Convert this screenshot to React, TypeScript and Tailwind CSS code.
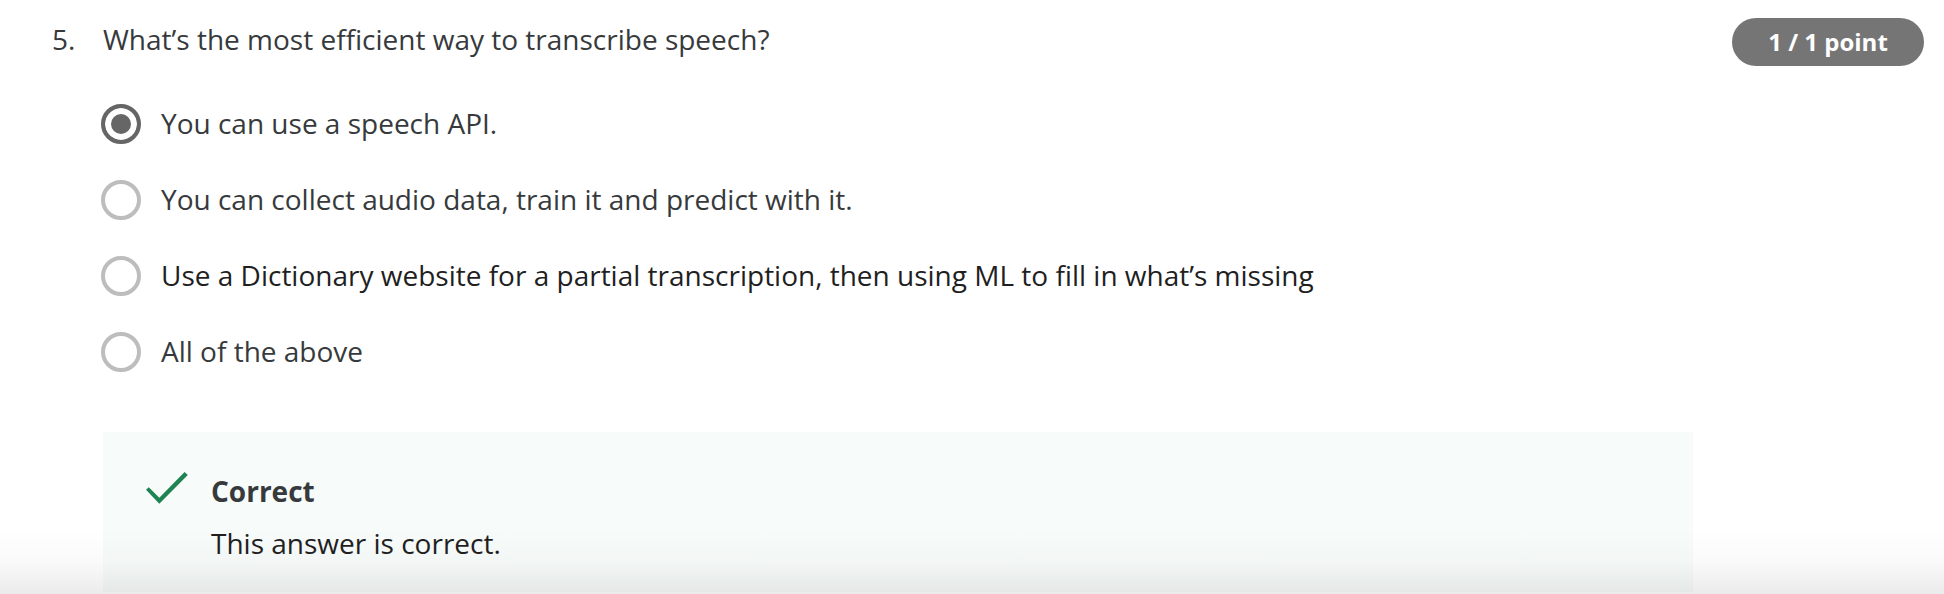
const options = [
  { text: "You can use a speech API.", color: "text-[#373a3c]" },
  { text: "You can collect audio data, train it and predict with it.", color: "text-[#373a3c]" },
  { text: "Use a Dictionary website for a partial transcription, then using ML to fill in what’s missing", color: "text-[#1f1f1f]" },
  { text: "All of the above", color: "text-[#373a3c]" },
];

export default function App() {
  return (
    <main className="relative overflow-hidden bg-white pb-0.5 font-['Open_Sans',sans-serif] text-[28px] leading-[38px] text-[#373a3c]">
      <section className="flex items-start pl-[52px] pr-5 pt-[18px]">
        <span className="w-[51px] shrink-0 pt-0.5">5.</span>
        <fieldset className="min-w-0 grow">
          <legend className="pt-0.5">What’s the most efficient way to transcribe speech?</legend>
          <div className="mt-[46px] flex flex-col gap-9">
            {options.map((option, index) => (
              <label key={option.text} className={`flex items-start gap-5 ${option.color}`}>
                <input
                  type="radio"
                  name="answer"
                  defaultChecked={index === 0}
                  className="-ml-0.5 size-10 shrink-0 appearance-none rounded-full border-4 border-[#bdbdbd] bg-white checked:border-[#666666] checked:bg-[#666666] checked:shadow-[inset_0_0_0_6px_#ffffff]"
                />
                <span>{option.text}</span>
              </label>
            ))}
          </div>
        </fieldset>
        <span className="flex h-12 w-48 shrink-0 items-center justify-center rounded-full bg-[#757575] text-2xl font-bold text-white">
          1 / 1 point
        </span>
      </section>
      <section className="ml-[103px] mr-[251px] mt-[60px] flex gap-[23px] bg-[#f7fbf9] px-[43px] pb-[30px] pt-10">
        <svg viewBox="0 0 42 32" className="h-8 w-[42px] shrink-0" fill="#1f8354" aria-hidden="true">
          <path d="M0 17.7 2.8 15.2 13.3 25.7 38.6 0 41.8 3.1 13.3 31.7Z" />
        </svg>
        <div>
          <h2 className="font-bold">Correct</h2>
          <p className="mt-3.5 text-[#1f1f1f]">This answer is correct.</p>
        </div>
      </section>
      <div className="pointer-events-none absolute inset-x-0 bottom-0 h-16 bg-linear-to-b from-transparent via-black/2 to-black/8" />
    </main>
  );
}
